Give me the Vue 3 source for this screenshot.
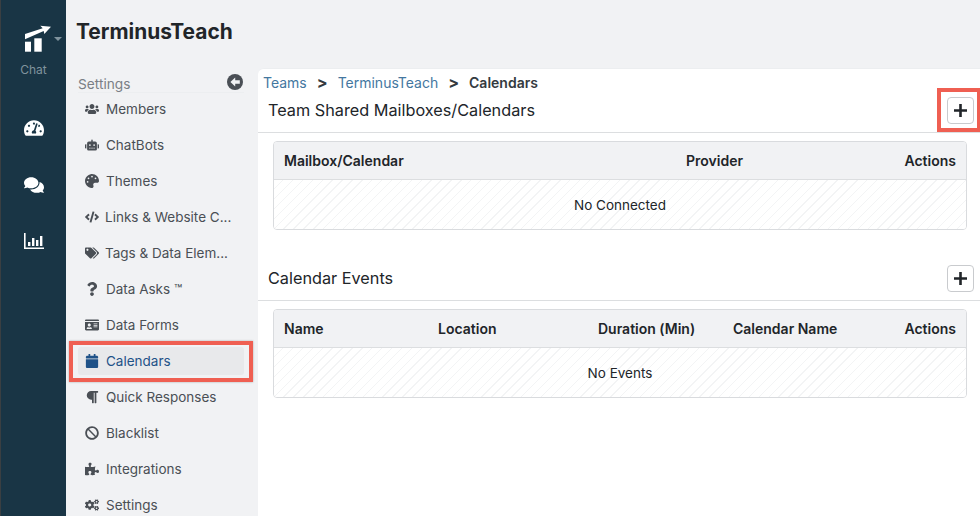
<script setup>
const items = [
  { label: 'Members', vb: '0 0 640 512', d: 'M96 224c35.3 0 64-28.7 64-64s-28.7-64-64-64-64 28.7-64 64 28.7 64 64 64zm448 0c35.3 0 64-28.7 64-64s-28.7-64-64-64-64 28.7-64 64 28.7 64 64 64zm32 32h-64c-17.6 0-33.5 7.1-45.1 18.6 40.3 22.1 68.9 62 75.1 109.4h66c17.7 0 32-14.3 32-32v-32c0-35.3-28.7-64-64-64zm-256 0c61.9 0 112-50.1 112-112S381.9 32 320 32 208 82.1 208 144s50.1 112 112 112zm76.8 32h-8.3c-20.8 10-43.9 16-68.5 16s-47.6-6-68.5-16h-8.3C179.6 288 128 339.6 128 403.2V432c0 26.5 21.5 48 48 48h288c26.5 0 48-21.5 48-48v-28.8c0-63.6-51.6-115.2-115.2-115.2zm-223.7-13.4C161.5 263.1 145.6 256 128 256H64c-35.3 0-64 28.7-64 64v32c0 17.7 14.3 32 32 32h65.9c6.3-47.4 34.9-87.3 75.2-109.4z' },
  { label: 'ChatBots', vb: '0 0 640 512', d: 'M32,224H64V416H32A31.96166,31.96166,0,0,1,0,384V256A31.96166,31.96166,0,0,1,32,224Zm512-48V448a64.06328,64.06328,0,0,1-64,64H160a64.06328,64.06328,0,0,1-64-64V176a79.974,79.974,0,0,1,80-80H288V32a32,32,0,0,1,64,0V96H464A79.974,79.974,0,0,1,544,176ZM264,256a40,40,0,1,0-40,40A39.997,39.997,0,0,0,264,256Zm-8,128H192v32h64Zm96,0H288v32h64ZM456,256a40,40,0,1,0-40,40A39.997,39.997,0,0,0,456,256Zm-8,128H384v32h64ZM640,256V384a31.96166,31.96166,0,0,1-32,32H576V224h32A31.96166,31.96166,0,0,1,640,256Z' },
  { label: 'Themes', vb: '0 0 512 512', d: 'M204.3 5C104.9 24.4 24.8 104.3 5.2 203.4c-37 187 131.7 326.4 258.8 306.7 41.2-6.4 61.4-54.6 42.5-91.7-23.1-45.4 9.9-98.4 60.9-98.4h79.7c35.8 0 64.8-29.6 64.9-65.3C511.5 97.1 368.1-26.9 204.3 5zM96 320c-17.7 0-32-14.3-32-32s14.3-32 32-32 32 14.3 32 32-14.3 32-32 32zm32-128c-17.7 0-32-14.3-32-32s14.3-32 32-32 32 14.3 32 32-14.3 32-32 32zm128-64c-17.7 0-32-14.3-32-32s14.3-32 32-32 32 14.3 32 32-14.3 32-32 32zm128 64c-17.7 0-32-14.3-32-32s14.3-32 32-32 32 14.3 32 32-14.3 32-32 32z' },
  { label: 'Links & Website C...', tight: true, vb: '0 0 640 512', d: 'M278.9 511.5l-61-17.7c-6.4-1.8-10-8.5-8.2-14.9L346.2 8.7c1.8-6.4 8.5-10 14.9-8.2l61 17.7c6.4 1.8 10 8.5 8.2 14.9L293.8 503.3c-1.9 6.4-8.5 10.1-14.9 8.2zm-114-112.2l43.5-46.4c4.6-4.9 4.3-12.7-.8-17.2L117 256l90.6-79.7c5.1-4.5 5.5-12.3.8-17.2l-43.5-46.4c-4.5-4.8-12.1-5.1-17-.5L3.8 247.2c-5.1 4.7-5.1 12.8 0 17.5l144.1 135.1c4.9 4.6 12.5 4.4 17-.5zm327.2.6l144.1-135.1c5.1-4.7 5.1-12.8 0-17.5L492.1 112.1c-4.8-4.5-12.4-4.3-17 .5L431.6 159c-4.6 4.9-4.3 12.7.8 17.2L523 256l-90.6 79.7c-5.1 4.5-5.5 12.3-.8 17.2l43.5 46.4c4.5 4.9 12.1 5.1 17 .6z' },
  { label: 'Tags & Data Elem...', tight: true, vb: '0 0 640 512', d: 'M497.941 225.941L286.059 14.059A48 48 0 0 0 252.118 0H48C21.49 0 0 21.49 0 48v204.118a48 48 0 0 0 14.059 33.941l211.882 211.882c18.744 18.745 49.136 18.746 67.882 0l204.118-204.118c18.745-18.745 18.745-49.137 0-67.882zM112 160c-26.51 0-48-21.49-48-48s21.49-48 48-48 48 21.49 48 48-21.49 48-48 48zm513.941 133.823L421.823 497.941c-18.745 18.745-49.137 18.745-67.882 0l-.36-.36L527.64 323.522c16.999-16.999 26.36-39.6 26.36-63.64s-9.362-46.641-26.36-63.64L331.397 0h48.721a48 48 0 0 1 33.941 14.059l211.882 211.882c18.745 18.745 18.745 49.137 0 67.882z' },
  { label: 'Data Asks ™', vb: '0 0 384 512', d: 'M202.021 0C122.202 0 70.503 32.703 29.914 91.026c-7.363 10.58-5.093 25.086 5.178 32.874l43.138 32.709c10.373 7.865 25.132 6.026 33.253-4.148 25.049-31.381 43.63-49.449 82.757-49.449 30.764 0 68.816 19.799 68.816 49.631 0 22.552-18.617 34.134-48.993 51.164-35.423 19.86-82.299 44.576-82.299 106.405V320c0 13.255 10.745 24 24 24h72.471c13.255 0 24-10.745 24-24v-5.773c0-42.86 125.268-44.645 125.268-160.627C377.504 66.256 286.902 0 202.021 0zM192 373.459c-38.196 0-69.271 31.075-69.271 69.271 0 38.195 31.075 69.27 69.271 69.27s69.271-31.075 69.271-69.271-31.075-69.27-69.271-69.27z' },
  { label: 'Data Forms', vb: '0 0 576 512', d: 'M528 32H48C21.5 32 0 53.5 0 80v16h576V80c0-26.5-21.5-48-48-48zM0 432c0 26.5 21.5 48 48 48h480c26.5 0 48-21.5 48-48V128H0v304zm352-232c0-4.4 3.6-8 8-8h144c4.4 0 8 3.6 8 8v16c0 4.4-3.6 8-8 8H360c-4.4 0-8-3.6-8-8v-16zm0 64c0-4.4 3.6-8 8-8h144c4.4 0 8 3.6 8 8v16c0 4.4-3.6 8-8 8H360c-4.4 0-8-3.6-8-8v-16zm0 64c0-4.4 3.6-8 8-8h144c4.4 0 8 3.6 8 8v16c0 4.4-3.6 8-8 8H360c-4.4 0-8-3.6-8-8v-16zM176 192c35.3 0 64 28.7 64 64s-28.7 64-64 64-64-28.7-64-64 28.7-64 64-64zM67.1 396.2C75.5 370.5 99.6 352 128 352h8.2c12.3 5.1 25.7 8 39.8 8s27.6-2.9 39.8-8h8.2c28.4 0 52.5 18.5 60.9 44.2 3.2 9.9-5.2 19.8-15.6 19.8H82.7c-10.4 0-18.8-10-15.6-19.8z' },
  { label: 'Calendars', active: true, vb: '0 0 448 512', d: 'M12 192h424c6.6 0 12 5.4 12 12v260c0 26.5-21.5 48-48 48H48c-26.5 0-48-21.5-48-48V204c0-6.6 5.4-12 12-12zm436-44v-36c0-26.5-21.5-48-48-48h-48V12c0-6.6-5.4-12-12-12h-40c-6.6 0-12 5.4-12 12v52H160V12c0-6.6-5.4-12-12-12h-40c-6.6 0-12 5.4-12 12v52H48C21.5 64 0 85.5 0 112v36c0 6.6 5.4 12 12 12h424c6.6 0 12-5.4 12-12z' },
  { label: 'Quick Responses', vb: '0 0 448 512', d: 'M448 48v32a16 16 0 0 1-16 16h-48v368a16 16 0 0 1-16 16h-32a16 16 0 0 1-16-16V96h-32v368a16 16 0 0 1-16 16h-32a16 16 0 0 1-16-16V352h-32a160 160 0 0 1 0-320h240a16 16 0 0 1 16 16z' },
  { label: 'Blacklist', vb: '0 0 512 512', d: 'M256 8C119 8 8 119 8 256s111 248 248 248 248-111 248-248S393 8 256 8zm130 118c65 65 69 167 15 237L149 111c70-54 172-50 237 15zM126 386c-65-65-69-167-15-237l252 252c-70 54-172 50-237-15z' },
  { label: 'Integrations', vb: '0 0 576 512', d: 'M519.442 288.651c-41.519 0-59.5 31.593-82.058 31.593C377.409 320.244 432 144 432 144s-196.288 80-196.288-3.297c0-35.827 36.288-46.25 36.288-85.985C272 19.216 243.885 0 210.539 0c-34.654 0-66.366 18.891-66.366 56.346 0 41.364 31.711 59.277 31.711 81.75C175.885 207.719 0 166.758 0 166.758v333.237s178.635 41.047 178.635-28.662c0-22.473-40-40.107-40-81.471 0-37.456 29.25-56.346 63.577-56.346 33.673 0 61.788 19.216 61.788 54.717 0 39.735-36.288 50.158-36.288 85.985 0 60.803 129.675 25.73 181.23 25.73 0 0-34.725-120.101 25.827-120.101 35.962 0 46.423 36.152 86.308 36.152C556.712 416 576 387.99 576 354.443c0-34.199-18.962-65.792-56.558-65.792z' },
  { label: 'Settings', vb: '0 0 640 512', d: 'M512.1 191l-8.2 14.3c-3 5.3-9.4 7.5-15.1 5.4-11.8-4.4-22.6-10.7-32.1-18.6-4.6-3.8-5.8-10.5-2.8-15.7l8.2-14.3c-6.9-8-12.3-17.3-15.9-27.4h-16.5c-6 0-11.2-4.3-12.2-10.3-2-12-2.1-24.6 0-37.1 1-6 6.2-10.4 12.2-10.4h16.5c3.6-10.1 9-19.4 15.9-27.4l-8.2-14.3c-3-5.2-1.9-11.9 2.8-15.7 9.5-7.9 20.4-14.2 32.1-18.6 5.7-2.1 12.1.1 15.1 5.4l8.2 14.3c10.5-1.9 21.2-1.9 31.7 0L552 6.3c3-5.3 9.4-7.5 15.1-5.4 11.8 4.4 22.6 10.7 32.1 18.6 4.6 3.8 5.8 10.5 2.8 15.7l-8.2 14.3c6.9 8 12.3 17.3 15.9 27.4h16.5c6 0 11.2 4.3 12.2 10.3 2 12 2.1 24.6 0 37.1-1 6-6.2 10.4-12.2 10.4h-16.5c-3.6 10.1-9 19.4-15.9 27.4l8.2 14.3c3 5.2 1.9 11.9-2.8 15.7-9.5 7.9-20.4 14.2-32.1 18.6-5.7 2.1-12.1-.1-15.1-5.4l-8.2-14.3c-10.4 1.9-21.2 1.9-31.7 0zm-10.5-58.8c38.5 29.6 82.4-14.3 52.8-52.8-38.5-29.7-82.4 14.3-52.8 52.8zM386.3 286.1l33.7 16.8c10.1 5.8 14.5 18.1 10.5 29.1-8.9 24.2-26.4 46.4-42.6 65.8-7.4 8.9-20.2 11.1-30.3 5.3l-29.1-16.8c-16 13.7-34.6 24.6-54.9 31.7v33.6c0 11.6-8.3 21.6-19.7 23.6-24.6 4.2-50.4 4.4-75.9 0-11.5-2-20-11.9-20-23.6V418c-20.3-7.2-38.9-18-54.9-31.7L74 403c-10 5.8-22.9 3.6-30.3-5.3-16.2-19.4-33.3-41.6-42.2-65.7-4-10.9.4-23.2 10.5-29.1l33.3-16.8c-3.9-20.9-3.9-42.4 0-63.4L12 205.8c-10.1-5.8-14.6-18.1-10.5-29 8.9-24.2 26-46.4 42.2-65.8 7.4-8.9 20.2-11.1 30.3-5.3l29.1 16.8c16-13.7 34.6-24.6 54.9-31.7V57.1c0-11.5 8.2-21.5 19.6-23.5 24.6-4.2 50.5-4.4 76-.1 11.5 2 20 11.9 20 23.6v33.6c20.3 7.2 38.9 18 54.9 31.7l29.1-16.8c10-5.8 22.9-3.6 30.3 5.3 16.2 19.4 33.2 41.6 42.1 65.8 4 10.9.1 23.2-10 29.1l-33.7 16.8c3.9 21 3.9 42.5 0 63.5zm-117.6 21.1c59.2-77-28.7-164.9-105.7-105.7-59.2 77 28.7 164.9 105.7 105.7zm243.4 182.7l-8.2 14.3c-3 5.3-9.4 7.5-15.1 5.4-11.8-4.4-22.6-10.7-32.1-18.6-4.6-3.8-5.8-10.5-2.8-15.7l8.2-14.3c-6.9-8-12.3-17.3-15.9-27.4h-16.5c-6 0-11.2-4.3-12.2-10.3-2-12-2.1-24.6 0-37.1 1-6 6.2-10.4 12.2-10.4h16.5c3.6-10.1 9-19.4 15.9-27.4l-8.2-14.3c-3-5.2-1.9-11.9 2.8-15.7 9.5-7.9 20.4-14.2 32.1-18.6 5.7-2.1 12.1.1 15.1 5.4l8.2 14.3c10.5-1.9 21.2-1.9 31.7 0l8.2-14.3c3-5.3 9.4-7.5 15.1-5.4 11.8 4.4 22.6 10.7 32.1 18.6 4.6 3.8 5.8 10.5 2.8 15.7l-8.2 14.3c6.9 8 12.3 17.3 15.9 27.4h16.5c6 0 11.2 4.3 12.2 10.3 2 12 2.1 24.6 0 37.1-1 6-6.2 10.4-12.2 10.4h-16.5c-3.6 10.1-9 19.4-15.9 27.4l8.2 14.3c3 5.2 1.9 11.9-2.8 15.7-9.5 7.9-20.4 14.2-32.1 18.6-5.7 2.1-12.1-.1-15.1-5.4l-8.2-14.3c-10.4 1.9-21.2 1.9-31.7 0zM501.6 431c38.5 29.6 82.4-14.3 52.8-52.8-38.5-29.6-82.4 14.3-52.8 52.8z' },
]
</script>

<template>
  <div class="page">
    <nav class="rail">
      <div class="brand">
        <svg class="logo" width="28" height="26" viewBox="0 0 28 26">
          <path d="M0 8L17.7 2.3 15.3-.3 26 .7 19.3 8 18.7 5 0 13.3Z" fill="#fff" />
          <rect x="0" y="15.7" width="6" height="10" fill="#fff" />
          <rect x="9.3" y="12.3" width="7.4" height="13.4" fill="#fff" />
        </svg>
        <span class="caret"></span>
      </div>
      <span class="brand-label">Chat</span>
      <svg class="rail-icon first" viewBox="0 0 576 512"><path d="M288 32C128.94 32 0 160.94 0 320c0 52.8 14.25 102.26 39.06 144.8 5.61 9.62 16.3 15.2 27.44 15.2h443c11.14 0 21.83-5.58 27.44-15.2C561.75 422.26 576 372.8 576 320c0-159.06-128.94-288-288-288zm0 64c14.71 0 26.58 10.13 30.32 23.65-1.11 2.26-2.64 4.23-3.45 6.67l-9.22 27.67c-5.13 3.49-10.97 6.01-17.64 6.01-17.67 0-32-14.33-32-32S270.33 96 288 96zM96 384c-17.67 0-32-14.33-32-32s14.33-32 32-32 32 14.33 32 32-14.33 32-32 32zm48-160c-17.67 0-32-14.33-32-32s14.33-32 32-32 32 14.33 32 32-14.33 32-32 32zm246.77-72.41l-61.33 184C343.13 347.33 352 364.54 352 384c0 11.72-3.38 22.55-8.88 32H232.88c-5.5-9.45-8.88-20.28-8.88-32 0-33.94 26.5-61.43 59.9-63.59l61.34-184.01c4.17-12.56 17.73-19.45 30.36-15.17 12.57 4.19 19.35 17.79 15.17 30.36zm14.66 57.2l15.52-46.55c3.47-1.29 7.13-2.23 11.05-2.23 17.67 0 32 14.33 32 32s-14.33 32-32 32c-11.38-.01-20.89-6.28-26.57-15.22zM480 384c-17.67 0-32-14.33-32-32s14.33-32 32-32 32 14.33 32 32-14.33 32-32 32z" /></svg>
      <svg class="rail-icon" viewBox="0 0 576 512"><path d="M416 192c0-88.4-93.1-160-208-160S0 103.6 0 192c0 34.3 14.1 65.9 38 92-13.4 30.2-35.5 54.2-35.8 54.5-2.2 2.3-2.8 5.7-1.5 8.7S4.8 352 8 352c36.6 0 66.9-12.3 88.7-25 32.2 15.7 70.3 25 111.3 25 114.9 0 208-71.6 208-160zm122 220c23.9-26 38-57.7 38-92 0-66.9-53.5-124.2-129.3-148.1.9 6.6 1.3 13.3 1.3 20.1 0 105.9-107.7 192-240 192-10.8 0-21.3-.8-31.7-1.9C207.8 439.6 281.8 480 368 480c41 0 79.1-9.2 111.3-25 21.8 12.7 52.1 25 88.7 25 3.2 0 6.1-1.9 7.3-4.8 1.3-2.9.7-6.3-1.5-8.7-.3-.3-22.4-24.2-35.8-54.5z" /></svg>
      <svg class="rail-icon" viewBox="0 0 20 18"><path d="M0 1h1.6v14.6H20V17H0z" /><rect x="4" y="10" width="2.4" height="4" /><rect x="8" y="6" width="2.4" height="8" /><rect x="12" y="8" width="2.4" height="6" /><rect x="16" y="4" width="2.4" height="10" /></svg>
    </nav>

    <div class="content">
      <h1 class="team">TerminusTeach</h1>
      <div class="columns">
        <aside class="side">
          <div class="side-head">
            <span>Settings</span>
            <svg class="back" viewBox="0 0 16 16">
              <circle cx="8" cy="8" r="8" fill="#4a4f55" />
              <path d="M8.2 3.4L3.4 8l4.8 4.6V9.8h4.6V6.2H8.2z" fill="#f1f2f4" />
            </svg>
          </div>
          <ul class="menu">
            <li v-for="item in items" :key="item.label" class="entry" :class="{ active: item.active, tight: item.tight }">
              <span class="icon-box">
                <svg class="icon" :viewBox="item.vb"><path :d="item.d" /></svg>
              </span>
              <span class="entry-label">{{ item.label }}</span>
            </li>
          </ul>
        </aside>

        <main class="main">
          <div class="crumbs">
            <a>Teams</a><b class="sep">&gt;</b><a>TerminusTeach</a><b class="sep">&gt;</b><b class="here">Calendars</b>
          </div>

          <div class="bar">
            <h2>Team Shared Mailboxes/Calendars</h2>
            <button class="add marked" type="button">
              <svg viewBox="0 0 14 14"><path d="M5.6 0h2.8v5.6H14v2.8H8.4V14H5.6V8.4H0V5.6h5.6z" /></svg>
            </button>
          </div>
          <div class="card">
            <div class="row head one">
              <span>Mailbox/Calendar</span><span>Provider</span><span class="end">Actions</span>
            </div>
            <div class="empty">No Connected</div>
          </div>

          <div class="bar second">
            <h2>Calendar Events</h2>
            <button class="add" type="button">
              <svg viewBox="0 0 14 14"><path d="M5.6 0h2.8v5.6H14v2.8H8.4V14H5.6V8.4H0V5.6h5.6z" /></svg>
            </button>
          </div>
          <div class="card">
            <div class="row head two">
              <span>Name</span><span>Location</span><span>Duration (Min)</span><span>Calendar Name</span><span class="end">Actions</span>
            </div>
            <div class="empty">No Events</div>
          </div>
        </main>
      </div>
    </div>
  </div>
</template>

<style>
html, body { margin: 0; background: #f1f2f4; }
</style>

<style scoped>
.page {
  display: flex;
  width: 980px;
  height: 516px;
  overflow: hidden;
  font-family: Inter, "Liberation Sans", sans-serif;
  background: #f1f2f4;
  color: #212529;
}
.rail {
  width: 65px;
  flex: none;
  border-left: 1px solid #3a3f42;
  background: #193545;
  display: flex;
  flex-direction: column;
  align-items: center;
}
.brand { position: relative; width: 28px; height: 26px; margin-top: 26px; margin-left: 11px; }
.logo { display: block; overflow: visible; }
.caret {
  position: absolute;
  left: 29px;
  top: 11px;
  border: 4px solid transparent;
  border-top: 4px solid #80939d;
  border-bottom: 0;
}
.brand-label { font-size: 12px; line-height: 16px; color: #80939d; margin-top: 10px; }
.rail-icon { width: 20px; height: 18px; fill: #fff; margin-bottom: 38.5px; }
.rail-icon.first { margin-top: 41px; }

.content { flex: 1; min-width: 0; display: flex; flex-direction: column; }
.team {
  margin: 0;
  height: 68px;
  padding: 18px 0 0 10px;
  box-sizing: border-box;
  font-size: 20.9px;
  line-height: 28px;
  font-weight: 700;
  color: #212529;
}
.columns { display: flex; flex: 1; min-height: 0; }

.side { width: 192px; flex: none; }
.side-head {
  height: 24px;
  margin: 0 14px 2px 12px;
  padding-right: 1px;
  display: flex;
  justify-content: space-between;
  align-items: flex-start;
  border-bottom: 1px solid #eceef0;
  font-size: 13.7px;
  color: #7a7f85;
}
.side-head span { line-height: 32px; height: 24px; }
.back { width: 16px; height: 16px; margin-top: 6px; }
.menu { list-style: none; margin: 0; padding: 0 14px 0 12px; display: flex; flex-direction: column; gap: 8px; }
.entry {
  position: relative;
  height: 28px;
  flex: none;
  display: flex;
  align-items: center;
  font-size: 13.5px;
  color: #4a4f55;
  border-radius: 3px;
  padding-left: 7px;
}
.icon-box { width: 14px; height: 14px; flex: none; display: flex; align-items: center; justify-content: center; margin-right: 7px; }
.entry.tight .icon-box { margin-right: 6px; }
.icon { width: 14px; height: 14px; fill: currentColor; overflow: visible; }
.entry-label { white-space: nowrap; }
.entry.active { background: #e8e9eb; color: #1f5288; }
.entry.active::after {
  content: "";
  position: absolute;
  left: -9px;
  right: -9px;
  top: -6px;
  bottom: -7px;
  border: 4px solid #ef5f52;
  box-shadow: 0 0 2px rgba(0, 0, 0, .3);
  pointer-events: none;
}

.main {
  flex: 1;
  min-width: 0;
  background: #fff;
  border-top-left-radius: 6px;
  border-top: 1px solid #eceef0;
  padding-top: 5px;
}
.crumbs { padding-left: 5px; font-size: 14px; line-height: 17px; height: 17px; display: flex; align-items: center; color: #343a40; }
.crumbs a { color: #44779f; }
.sep { margin: 0 10px; font-size: 16px; font-weight: 700; }
.here { font-weight: 600; }
.bar {
  height: 35px;
  padding: 6px 6px 0 10px;
  display: flex;
  align-items: flex-start;
  justify-content: space-between;
  border-bottom: 1px solid #dcdee0;
}
.bar.second { margin-top: 29px; }
.bar h2 { margin: 0; font-size: 16.25px; line-height: 27px; font-weight: 400; color: #212529; }
.add {
  position: relative;
  width: 27px;
  height: 27px;
  padding: 0;
  background: #fff;
  border: 1px solid #c9cbce;
  border-radius: 4px;
  display: flex;
  align-items: center;
  justify-content: center;
}
.add svg { width: 13px; height: 13px; fill: #212529; }
.add.marked::after {
  content: "";
  position: absolute;
  left: -11px;
  top: -10px;
  width: 44px;
  height: 44px;
  box-sizing: border-box;
  border: 4px solid #ef5f52;
  pointer-events: none;
}
.card {
  margin: 8px 13px 0 15px;
  border: 1px solid #d9dbde;
  border-radius: 4px;
  overflow: hidden;
}
.row {
  display: grid;
  height: 37px;
  padding: 0 10px;
  align-items: center;
  font-size: 14px;
  font-weight: 600;
  color: #212529;
  background: #f1f2f4;
  border-bottom: 1px solid #dcdee0;
}
.row.one { grid-template-columns: 402px 1fr auto; }
.row.two { grid-template-columns: 154px 160px 135px 1fr auto; }
.end { text-align: right; }
.empty {
  height: 49px;
  display: flex;
  align-items: center;
  justify-content: center;
  font-size: 13.5px;
  color: #212529;
  background: repeating-linear-gradient(-45deg, #fff, #fff 6px, #f3f4f5 6px, #f3f4f5 7px);
}
</style>
